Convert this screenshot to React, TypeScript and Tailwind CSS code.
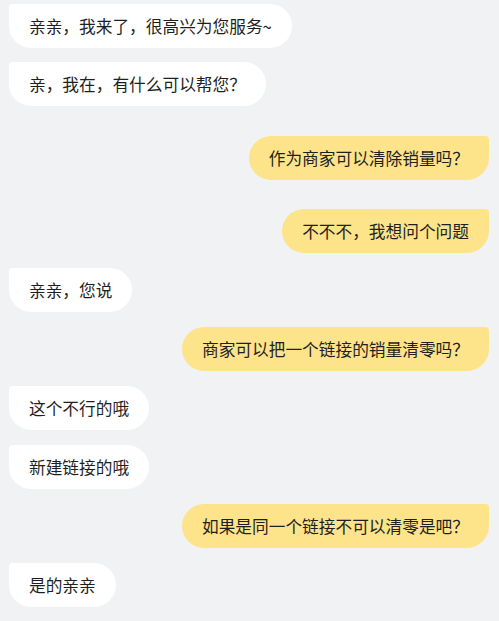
type Message = {
  text: string
  mine: boolean
  gap: string
}

const messages: Message[] = [
  { text: '亲亲，我来了，很高兴为您服务~', mine: false, gap: 'mt-1' },
  { text: '亲，我在，有什么可以帮您？', mine: false, gap: 'mt-[14px]' },
  { text: '作为商家可以清除销量吗？', mine: true, gap: 'mt-[30px]' },
  { text: '不不不，我想问个问题', mine: true, gap: 'mt-[29px]' },
  { text: '亲亲，您说', mine: false, gap: 'mt-[15px]' },
  { text: '商家可以把一个链接的销量清零吗？', mine: true, gap: 'mt-[15px]' },
  { text: '这个不行的哦', mine: false, gap: 'mt-[15px]' },
  { text: '新建链接的哦', mine: false, gap: 'mt-[15px]' },
  { text: '如果是同一个链接不可以清零是吧？', mine: true, gap: 'mt-[15px]' },
  { text: '是的亲亲', mine: false, gap: 'mt-[15px]' },
]

function Bubble({ text, mine, gap }: Message) {
  return (
    <div className={`flex ${mine ? 'justify-end' : 'justify-start'} ${gap}`}>
      <div
        className={
          mine
            ? 'h-11 flex items-center pl-5 pr-5 rounded-[22px] rounded-tr-[4px] bg-[#fde38a] text-[#1f1f1f]'
            : 'h-11 flex items-center pl-5 pr-5 rounded-[22px] rounded-tl-[4px] bg-white text-[#1f1f1f]'
        }
      >
        <span className="text-[16.7px] leading-6 whitespace-nowrap">{text}</span>
      </div>
    </div>
  )
}

export default function App() {
  return (
    <div
      className="w-[499px] h-[621px] overflow-hidden bg-[#f1f2f4] pl-[9px] pr-[10px] flex flex-col"
      style={{ fontFamily: '"Noto Sans CJK SC", "Noto Sans", sans-serif' }}
    >
      {messages.map((m, i) => (
        <Bubble key={i} {...m} />
      ))}
    </div>
  )
}
